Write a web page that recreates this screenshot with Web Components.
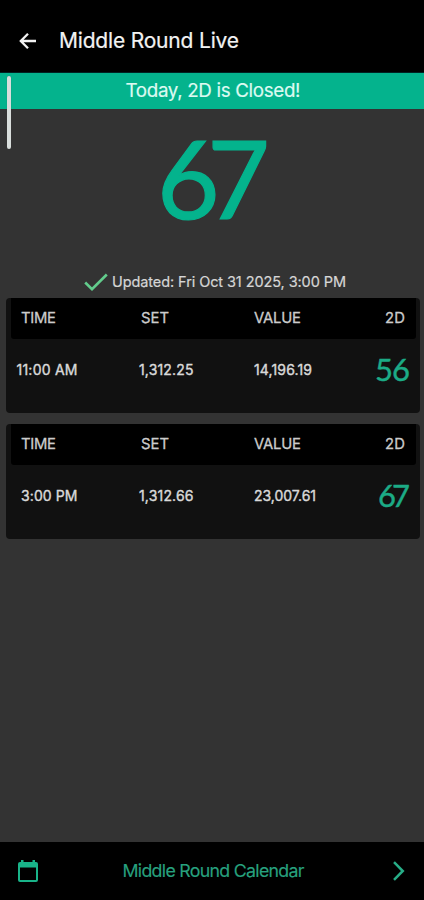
<!DOCTYPE html>
<html lang="en">
<head>
<meta charset="utf-8">
<title>Middle Round Live</title>
<style>
html,body{margin:0;height:100%;background:#333;overflow:hidden}
body{font-family:Inter,"Liberation Sans",sans-serif}
</style>
</head>
<body>
<live-app></live-app>
<script>
const define = (name, html, ready) => customElements.define(name, class extends HTMLElement {
  connectedCallback() {
    if (this.shadowRoot) return;
    this.attachShadow({mode: 'open'}).innerHTML = html;
    if (ready) ready.call(this, this.shadowRoot);
  }
});

// Single-line label whose tracking is adjusted to span the width given in "w".
define('fit-label', `<style>:host{display:block;white-space:nowrap;line-height:1}span{display:inline-block}</style><span><slot></slot></span>`, function (root) {
  const span = root.querySelector('span');
  const w = +this.getAttribute('w');
  const n = this.textContent.length;
  const s = (w - span.getBoundingClientRect().width) / (n - 1);
  span.style.letterSpacing = s + 'px';
  span.style.marginRight = -s + 'px';
});

define('top-bar', `<style>
:host{display:flex;align-items:center;height:72px;background:#000;color:#f2f2f2;padding:9px 0 0 19px;box-sizing:border-box;font-size:21px;font-weight:400;-webkit-text-stroke:.2px}
svg{width:18px;height:18px;margin-right:22px}</style>
<svg viewBox="0 0 18 18" fill="none" stroke="#f2f2f2" stroke-width="2.3"><path d="M17 9H2.500M9 1.700 1.800 9 9 16.300"/></svg>
<fit-label w="180">Middle Round Live</fit-label>`);

define('status-banner', `<style>
:host{display:flex;justify-content:center;align-items:center;height:36px;margin-top:1px;background:#04b38d;color:#dcfaf1;font-size:18.8px;padding-left:2px;box-sizing:border-box;-webkit-text-stroke:.2px}</style>
<fit-label w="175">Today, 2D is Closed!</fit-label>`);

define('live-result', `<style>
:host{display:flex;flex-direction:column;align-items:center;height:189px}
.big{font:400 108px/1 Lato,sans-serif;color:#04b38d;margin-top:14px;padding-left:3px;-webkit-text-stroke:1.2px #04b38d}
.up{display:flex;align-items:center;margin-top:42px;color:#d6d6d6;font-size:14.5px;gap:4px;padding-left:6px;-webkit-text-stroke:.2px}
svg{width:24px;height:18px}</style>
<fit-label class="big" w="113">67</fit-label>
<div class="up"><svg viewBox="0 0 24 18" fill="none" stroke="#62cc8c" stroke-width="2.6"><path d="m1.2 9.500 6.800 6.700L22.800 1.500"/></svg><fit-label w="234">Updated: Fri Oct 31 2025, 3:00 PM</fit-label></div>`);

define('result-card', `<style>
:host{display:block;height:115px;margin:0 4px 11px 6px;background:#111;border-radius:4px;overflow:hidden;color:#d9d9d9;font-size:14px}
.row{display:grid;grid-template-columns:133px 115px 1fr auto;align-items:center;box-sizing:border-box}
.head{height:41px;background:#000;margin:0 4px 0 5px;padding:0 11px 0 10px;color:#ccc;font-size:14.8px;grid-template-columns:120px 113px 1fr auto;border-radius:0 0 3px 3px;-webkit-text-stroke:.3px}
.data{height:61px;padding-right:10px;-webkit-text-stroke:.4px}
.two{font:400 31px/1 Lato,sans-serif;color:#1cab86;-webkit-text-stroke:.4px}
</style>
<div class="row head"><fit-label w="35">TIME</fit-label><fit-label w="28">SET</fit-label><fit-label w="47">VALUE</fit-label><fit-label w="20">2D</fit-label></div>
<div class="row data"></div>`, function (root) {
  const [time, tw, set, value, vw, two, dw] = this.getAttribute('data').split('|');
  root.querySelector('.data').innerHTML =
    `<fit-label w="${tw}" style="padding-left:${71.5 - tw}px">${time}</fit-label><fit-label w="54.500">${set}</fit-label><fit-label w="${vw}">${value}</fit-label><fit-label class="two" w="${dw}">${two}</fit-label>`;
});

define('calendar-bar', `<style>
:host{display:flex;align-items:center;justify-content:space-between;height:58px;background:#000;color:#27a17e;padding:0 19px 0 18px;box-sizing:border-box;font-size:17.8px;-webkit-text-stroke:.15px}
svg{display:block}
fit-label{margin-right:3px}</style>
<svg width="20" height="22" viewBox="0 0 20 22"><path fill="#19b489" d="M3 0h2.500v2h9V0H17v2h1q2 0 2 2v16q0 2-2 2H2q-2 0-2-2V4q0-2 2-2h1zM2 7.500V20h16V7.500z" fill-rule="evenodd"/></svg>
<fit-label w="182">Middle Round Calendar</fit-label>
<svg width="13" height="20" viewBox="0 0 13 20" fill="none" stroke="#27ad87" stroke-width="2.5"><path d="m2 1.200 8.800 8.800L2 18.800"/></svg>`);

define('live-app', `<style>
:host{display:flex;flex-direction:column;height:900px;width:424px;background:#333;position:relative;overflow:hidden}
calendar-bar{margin-top:auto}
.thumb{position:absolute;left:7px;top:76px;width:4px;height:73px;border-radius:2px;background:#d9dedc;box-shadow:0 0 1px #4449}
.gap{height:1px;background:#022;margin-bottom:-1px}</style>
<top-bar></top-bar><div class="gap"></div><status-banner></status-banner><live-result></live-result>
<result-card data="11:00 AM|61|1,312.25|14,196.19|58|56|35"></result-card>
<result-card data="3:00 PM|56.5|1,312.66|23,007.61|62|67|32"></result-card>
<calendar-bar></calendar-bar><div class="thumb"></div>`);
</script>
</body>
</html>
